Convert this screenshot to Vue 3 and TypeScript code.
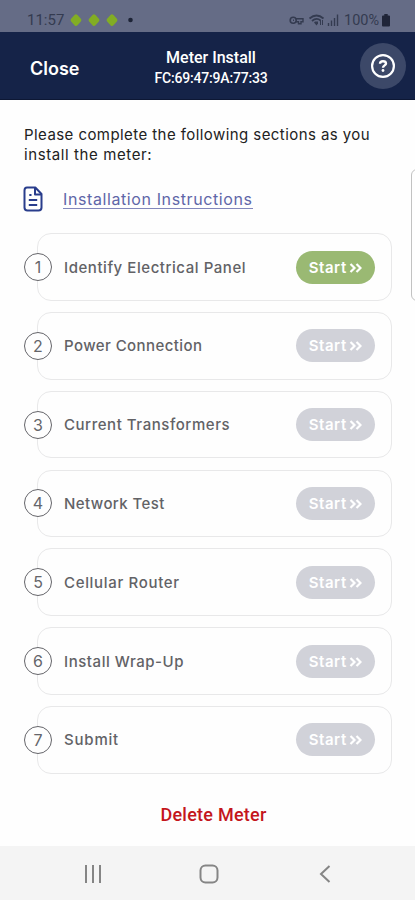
<script setup lang="ts">
interface Section {
  title: string
  active: boolean
}

const sections: Section[] = [
  { title: 'Identify Electrical Panel', active: true },
  { title: 'Power Connection', active: false },
  { title: 'Current Transformers', active: false },
  { title: 'Network Test', active: false },
  { title: 'Cellular Router', active: false },
  { title: 'Install Wrap-Up', active: false },
  { title: 'Submit', active: false },
]
</script>

<template>
  <div class="screen">
    <div class="status">
      <span class="clock">11:57</span>
      <svg class="diamonds" width="70" height="14" viewBox="0 0 70 14">
        <g fill="#82ad24" stroke="#82ad24" stroke-width="4" stroke-linejoin="round">
          <path d="M7 3.400 10.400 7.200 7 11 3.600 7.200Z" />
          <path d="M25 3.400 28.400 7.200 25 11 21.600 7.200Z" />
          <path d="M43 3.400 46.400 7.200 43 11 39.600 7.200Z" />
        </g>
        <circle cx="61.500" cy="7" r="2.300" fill="#1d2336" />
      </svg>
      <div class="status-right">
        <svg width="50" height="14" viewBox="0 0 50 14" fill="none" stroke="#343b50">
          <circle cx="4.200" cy="7.200" r="3" stroke-width="1.600" />
          <path d="M4 7.200h1M7 5.700h7v3h-2v2h-2.500v-2H7" stroke-width="1.400" />
          <path d="M20.500 5.500Q27.500-.5 34.500 5.500M23 8Q27.500 4 31.500 7.500" stroke-width="1.800" />
          <path d="M25 9.500 27.500 12.500 29 10.500V8.500H26Z" fill="#343b50" stroke="none" />
          <path d="M31.500 7v5M33.500 7v5" stroke-width="1" />
          <path d="M39.500 10v3M42.500 7.500v5.500M45.500 5v8M48.500 1.500v11.500" stroke-width="1.400" />
        </svg>
        <span class="percent">100%</span>
        <svg width="8" height="14" viewBox="0 0 8 14" fill="#202538">
          <path d="M2.300 1h3.400v1.500H7q1 0 1 1v9q0 1-1 1H1q-1 0-1-1v-9q0-1 1-1h1.300Z" />
        </svg>
      </div>
    </div>

    <header class="header">
      <button class="close">Close</button>
      <div class="heading">
        <div class="title">Meter Install</div>
        <div class="mac">FC:69:47:9A:77:33</div>
      </div>
      <button class="help" aria-label="Help">
        <svg width="26" height="26" viewBox="0 0 26 26" fill="none" stroke="#fff">
          <circle cx="13" cy="13" r="10.900" stroke-width="2.200" />
          <path d="M10 10.700Q10.100 8.200 13 8.200T16 10.500C16 12.500 13 12.300 13 14.800" stroke-width="2.400" />
          <circle cx="13" cy="17.500" r="1.400" fill="#fff" stroke="none" />
        </svg>
      </button>
    </header>

    <main class="content">
      <p class="intro"><span class="line-one">Please complete the following sections as you</span><br><span class="line-two">install the meter:</span></p>
      <a class="instructions">
        <svg width="20" height="26" viewBox="0 0 20 26" fill="none" stroke="#293d8c" stroke-width="2" stroke-linejoin="round">
          <path d="M4 1.500h8.300L18.500 8v13.500q0 3-3 3h-11q-3 0-3-3v-17q0-3 2.500-3Z" />
          <path d="M12 2v6.500h6M5.800 14h8.400M5.800 19h8.400M6.300 9h2.200" />
        </svg>
        <span>Installation Instructions</span>
      </a>
      <ol class="sections">
        <li v-for="(section, index) in sections" :key="section.title" class="card">
          <span class="number">{{ index + 1 }}</span>
          <span :class="['label', 'label-' + (index + 1)]">{{ section.title }}</span>
          <button :class="['start', { active: section.active }]">
            <span>Start</span>
            <svg width="13" height="10" viewBox="0 0 13 10" fill="none" stroke="#fff" stroke-width="2.200">
              <path d="M1.500 1 5.500 5 1.500 9M7.500 1 11.500 5 7.500 9" />
            </svg>
          </button>
        </li>
      </ol>
      <button class="delete">Delete Meter</button>
    </main>

    <nav class="navbar">
      <svg width="18" height="20" viewBox="0 0 18 20" stroke="#858585" stroke-width="2">
        <path d="M2 1v18M9 1v18M16 1v18" />
      </svg>
      <svg class="home" width="20" height="20" viewBox="0 0 20 20" fill="none" stroke="#858585" stroke-width="2">
        <rect x="1.500" y="1.500" width="17" height="17" rx="5" />
      </svg>
      <svg width="12" height="20" viewBox="0 0 12 20" fill="none" stroke="#858585" stroke-width="2">
        <path d="M10.500 2 2 10l8.500 8" />
      </svg>
    </nav>
    <div class="edge-handle"></div>
  </div>
</template>

<style>
body {
  background: #fff;
}
</style>

<style scoped>
* {
  box-sizing: border-box;
}
button {
  border: 0;
  padding: 0;
  background: none;
  font: inherit;
  color: inherit;
}
.screen {
  position: relative;
  display: flex;
  flex-direction: column;
  width: 415px;
  height: 900px;
  overflow: hidden;
  background: #fefefe;
  font-family: Inter, sans-serif;
}
.status {
  display: flex;
  align-items: center;
  height: 32px;
  padding: 8px 25px 0 27px;
  background: #656c86;
  color: #343b50;
  font-family: Roboto, sans-serif;
  font-size: 15px;
}
.clock {
  width: 42px;
}
.status-right {
  display: flex;
  align-items: center;
  margin-left: auto;
}
.percent {
  width: 36px;
  margin: 0 2px 0 5px;
  font-size: 14.500px;
}
.header {
  display: flex;
  align-items: center;
  height: 67.500px;
  padding: 0 9px 0 30px;
  background: #152348;
  border-bottom: 1px solid #0d1734;
  color: #fff;
  font-family: Roboto, sans-serif;
}
.close {
  width: 105px;
  padding-top: 6px;
  text-align: left;
  font-family: Inter, sans-serif;
  font-size: 18px;
  font-weight: 600;
}
.heading {
  width: 152px;
  padding-top: 5px;
  text-align: center;
  line-height: 20px;
}
.title {
  font-size: 16px;
  font-weight: 500;
}
.mac {
  font-size: 14px;
  font-weight: 500;
  letter-spacing: -0.180px;
}
.help {
  display: grid;
  place-items: center;
  width: 46px;
  height: 46px;
  margin: 2px 0 0 auto;
  border-radius: 50%;
  background: #3c4868;
}
.content {
  display: flex;
  flex-direction: column;
  height: 746.500px;
  padding: 25px 23px 0 24px;
}
.intro {
  margin: 0;
  color: #222;
  font-size: 15px;
  line-height: 20.500px;
  white-space: nowrap;
}
.line-one {
  letter-spacing: 0.430px;
}
.line-two {
  letter-spacing: 0.600px;
}
.instructions {
  display: flex;
  align-items: center;
  gap: 20px;
  height: 26px;
  margin: 20.500px 0 21.300px -1px;
  color: #5f66a8;
  font-size: 16px;
  letter-spacing: 0.600px;
}
.instructions span {
  border-bottom: 1px solid #8287bc;
  line-height: 18px;
}
.sections {
  display: flex;
  flex-direction: column;
  gap: 11.300px;
  margin: 0;
  padding: 0 0 0 13px;
  list-style: none;
}
.card {
  display: flex;
  align-items: center;
  height: 67.500px;
  padding-right: 16px;
  border: 1.500px solid #e8e8e9;
  border-radius: 14px;
}
.number {
  display: grid;
  place-items: center;
  width: 28px;
  height: 28px;
  margin: 0 12px 0 -14px;
  border: 1.300px solid #65656a;
  border-radius: 50%;
  background: #fefefe;
  color: #65656a;
  font-size: 16px;
}
.label {
  color: #626266;
  font-size: 15px;
  font-weight: 500;
  letter-spacing: 0.550px;
  white-space: nowrap;
}
.label-2,
.label-4 {
  letter-spacing: 0.420px;
}
.label-5 {
  letter-spacing: 0.670px;
}
.label-7 {
  letter-spacing: 0.800px;
}
.start {
  display: flex;
  align-items: center;
  justify-content: center;
  gap: 2.500px;
  width: 79px;
  height: 33px;
  margin-left: auto;
  border-radius: 17px;
  background: #d1d2d9;
  color: #fff;
  font-size: 15px;
  font-weight: 600;
  letter-spacing: 0.550px;
}
.start svg {
  margin-top: 1px;
}
.start.active {
  background: #9ab973;
}
.delete {
  align-self: center;
  margin: 31px 0 0 11px;
  color: #c4161c;
  font-family: Roboto, sans-serif;
  font-size: 18px;
  font-weight: 500;
  line-height: 20px;
  letter-spacing: 0.250px;
}
.navbar {
  display: flex;
  align-items: center;
  justify-content: space-between;
  height: 54px;
  padding: 2px 84px 0;
  background: #f4f4f4;
}
.home {
  margin-right: 4px;
}
.edge-handle {
  position: absolute;
  top: 169px;
  right: -8px;
  width: 12px;
  height: 132px;
  border: 1.500px solid #c2c2c2;
  border-radius: 6px;
}
</style>
